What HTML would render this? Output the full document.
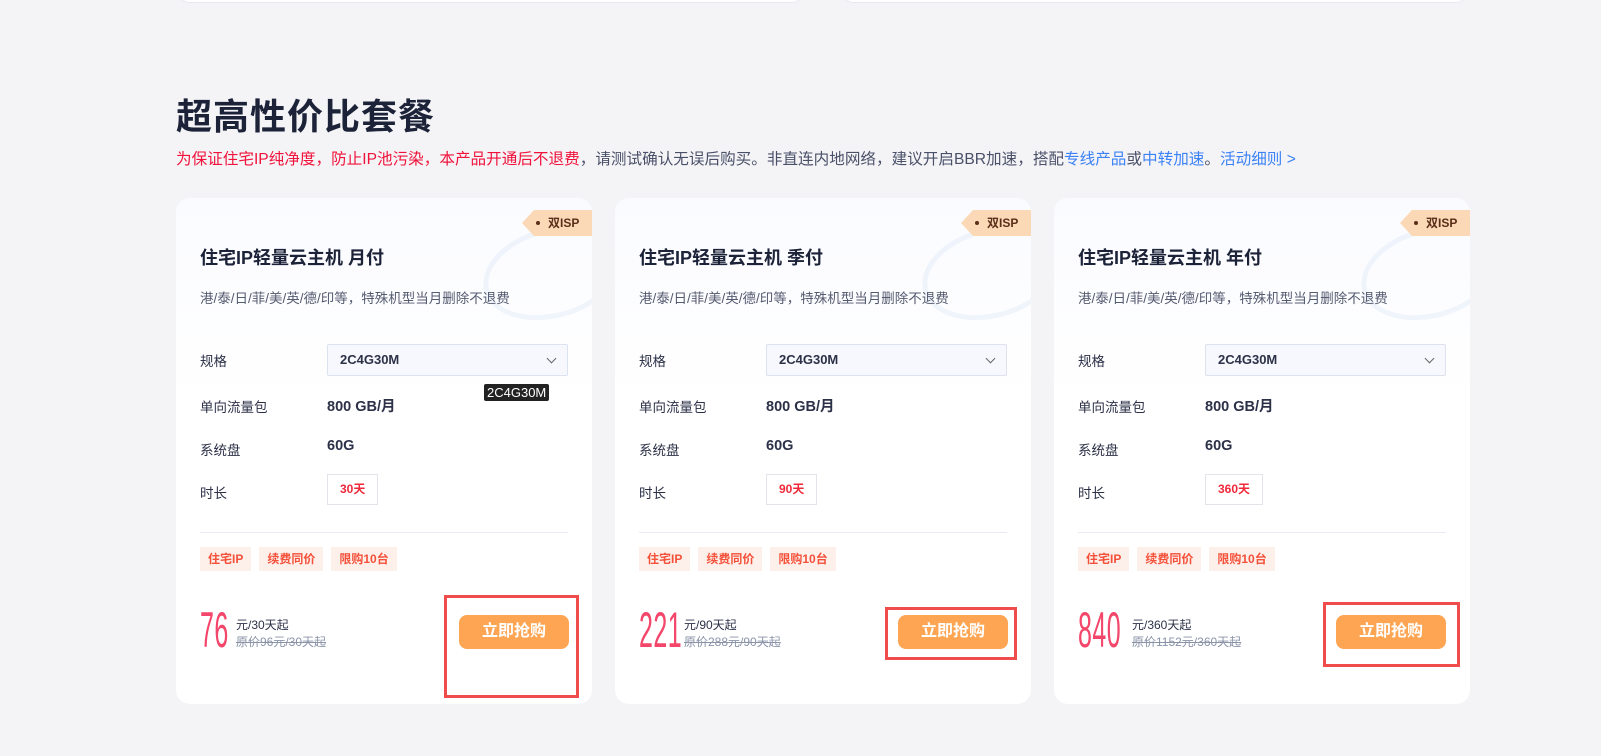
<!DOCTYPE html>
<html><head><meta charset="utf-8"><style>
*{margin:0;padding:0;box-sizing:border-box}
body{width:1601px;height:756px;background:#f4f4f7;font-family:"Liberation Sans","Noto Sans CJK SC",sans-serif;position:relative;overflow:hidden;color:#1f2540}
.top{position:absolute;top:-20px;height:23px;background:#fff;border-radius:0 0 14px 14px;border:1px solid #e8eaf2}
h1{position:absolute;left:176px;top:88px;font-size:36px;font-weight:700;color:#1c2238;letter-spacing:1px}
.note{position:absolute;left:176px;top:147px;font-size:15.6px;color:#4a5068;white-space:nowrap}
.r{color:#f0123a}.b{color:#3b82f6}
.card{position:absolute;top:198px;width:416px;height:506px;background:linear-gradient(180deg,#fafbff 0,#fff 40%);border-radius:14px;overflow:hidden}
.deco{position:absolute;right:-30px;top:30px;width:140px;height:90px;border-radius:50%;border:5px solid rgba(225,232,246,.45);transform:rotate(-15deg)}
.tag{position:absolute;right:0;top:12px;height:26px;width:70px;background:#fcd9b6;clip-path:polygon(12px 0,100% 0,100% 100%,12px 100%,0 50%);font-size:12px;font-weight:700;color:#5a2e1a;line-height:26px;padding-left:16px}
.tag:before{content:"";position:absolute;left:14px;top:11px;width:4px;height:4px;border-radius:50%;background:#5a2e1a}
.tag span{margin-left:10px}
.t{position:absolute;left:24px;top:46px;font-size:18px;font-weight:700;color:#1c2238}
.d{position:absolute;left:24px;top:89px;font-size:13.5px;color:#555b70}
.l{position:absolute;left:24px;font-size:13.5px;color:#2c3148}
.v{position:absolute;left:151px;font-size:14.5px;font-weight:700;color:#2c3148}
.sel{position:absolute;left:151px;top:146px;width:241px;height:32px;border:1px solid #dde2ef;background:#f7f8fd;border-radius:2px;font-size:13px;font-weight:700;padding-left:12px;line-height:30px;color:#2c3148}
.sel:after{content:"";position:absolute;right:12px;top:10px;width:6px;height:6px;border-right:1.3px solid #666;border-bottom:1.3px solid #666;transform:rotate(45deg)}
.dur{position:absolute;left:151px;top:276px;height:31px;border:1px solid #e2e4ea;font-size:12px;font-weight:700;color:#f0283a;line-height:29px;padding:0 12px}
.hr{position:absolute;left:24px;right:24px;top:334px;border-top:1px solid #e8ebf7}
.chips{position:absolute;left:24px;top:349px;display:flex;gap:8px}
.chips span{background:#fdf0ea;color:#f4503a;font-size:12px;font-weight:700;height:24px;line-height:24px;padding:0 8px}
.price{position:absolute;left:24px;top:404px;font-size:50px;line-height:56px;color:#f4456a;font-family:"Liberation Sans Narrow","Liberation Sans",sans-serif;transform:scaleX(.5);transform-origin:left;letter-spacing:1px}
.p1{position:absolute;top:418px;font-size:12px;color:#2c3148}
.p2{position:absolute;top:435px;font-size:12px;color:#8a93a8;text-decoration:line-through}
.btn{position:absolute;width:110px;height:34px;background:#fda552;border-radius:8px;color:#fff;font-size:16px;font-weight:700;text-align:center;line-height:34px}
.box{position:absolute;border:3px solid #f04c4c}
.tip{position:absolute;left:484px;top:384px;background:#222;color:#fff;font-size:13px;padding:1px 3px;border-radius:2px}
</style></head><body>
<div class="top" style="left:176px;width:629px"></div>
<div class="top" style="left:840px;width:629px"></div>
<h1>超高性价比套餐</h1>
<div class="note"><span class="r">为保证住宅IP纯净度，防止IP池污染，本产品开通后不退费</span>，请测试确认无误后购买。非直连内地网络，建议开启BBR加速，搭配<span class="b">专线产品</span>或<span class="b">中转加速</span>。<span class="b">活动细则 &gt;</span></div>

<div class="card" style="left:176px"><div class="deco"></div><div class="tag"><span>双ISP</span></div>
<div class="t">住宅IP轻量云主机 月付</div><div class="d">港/泰/日/菲/美/英/德/印等，特殊机型当月删除不退费</div>
<div class="l" style="top:152px">规格</div><div class="sel">2C4G30M</div>
<div class="l" style="top:198px">单向流量包</div><div class="v" style="top:197px">800 GB/月</div>
<div class="l" style="top:241px">系统盘</div><div class="v" style="top:240px">60G</div>
<div class="l" style="top:284px">时长</div><div class="dur">30天</div>
<div class="hr"></div><div class="chips"><span>住宅IP</span><span>续费同价</span><span>限购10台</span></div>
<div class="price">76</div><div class="p1" style="left:60px">元/30天起</div><div class="p2" style="left:60px">原价96元/30天起</div>
<div class="btn" style="left:283px;top:417px">立即抢购</div></div>

<div class="card" style="left:615px"><div class="deco"></div><div class="tag"><span>双ISP</span></div>
<div class="t">住宅IP轻量云主机 季付</div><div class="d">港/泰/日/菲/美/英/德/印等，特殊机型当月删除不退费</div>
<div class="l" style="top:152px">规格</div><div class="sel">2C4G30M</div>
<div class="l" style="top:198px">单向流量包</div><div class="v" style="top:197px">800 GB/月</div>
<div class="l" style="top:241px">系统盘</div><div class="v" style="top:240px">60G</div>
<div class="l" style="top:284px">时长</div><div class="dur">90天</div>
<div class="hr"></div><div class="chips"><span>住宅IP</span><span>续费同价</span><span>限购10台</span></div>
<div class="price">221</div><div class="p1" style="left:69px">元/90天起</div><div class="p2" style="left:69px">原价288元/90天起</div>
<div class="btn" style="left:283px;top:417px">立即抢购</div></div>

<div class="card" style="left:1054px"><div class="deco"></div><div class="tag"><span>双ISP</span></div>
<div class="t">住宅IP轻量云主机 年付</div><div class="d">港/泰/日/菲/美/英/德/印等，特殊机型当月删除不退费</div>
<div class="l" style="top:152px">规格</div><div class="sel">2C4G30M</div>
<div class="l" style="top:198px">单向流量包</div><div class="v" style="top:197px">800 GB/月</div>
<div class="l" style="top:241px">系统盘</div><div class="v" style="top:240px">60G</div>
<div class="l" style="top:284px">时长</div><div class="dur">360天</div>
<div class="hr"></div><div class="chips"><span>住宅IP</span><span>续费同价</span><span>限购10台</span></div>
<div class="price">840</div><div class="p1" style="left:78px">元/360天起</div><div class="p2" style="left:78px">原价1152元/360天起</div>
<div class="btn" style="left:282px;top:417px">立即抢购</div></div>

<div class="tip">2C4G30M</div>
<div class="box" style="left:444px;top:595px;width:135px;height:103px"></div>
<div class="box" style="left:885px;top:607px;width:132px;height:53px"></div>
<div class="box" style="left:1323px;top:602px;width:137px;height:65px"></div>
</body></html>
